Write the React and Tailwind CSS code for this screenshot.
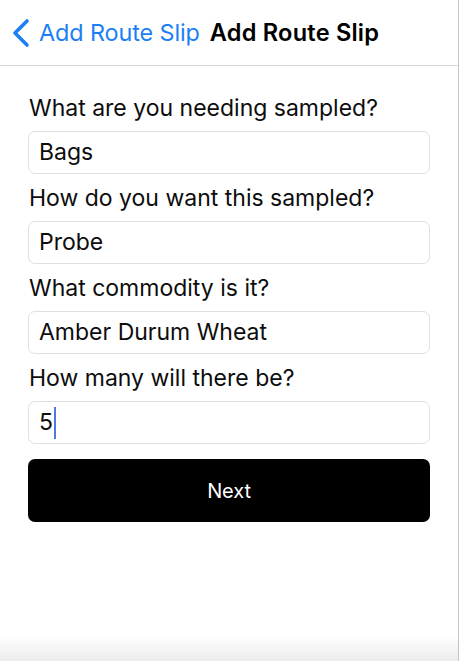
import { useState } from 'react'

const fields = [
  { label: 'What are you needing sampled?', value: 'Bags' },
  { label: 'How do you want this sampled?', value: 'Probe' },
  { label: 'What commodity is it?', value: 'Amber Durum Wheat' },
  { label: 'How many will there be?', value: '5', focused: true },
]

function BackChevron() {
  return (
    <svg width="20" height="30" viewBox="0 0 20 30" fill="none">
      <path d="M16 3L4 15l12 12" stroke="#1b7ff5" strokeWidth="3.6" strokeLinecap="round" strokeLinejoin="round" />
    </svg>
  )
}

export default function App() {
  const [values] = useState(fields.map((f) => f.value))

  return (
    <div className="w-[460px] h-[661px] bg-white flex font-['Inter','Liberation_Sans',sans-serif]">
      <div className="w-[459px] h-full flex flex-col border-r border-[#c4c4c4] bg-gradient-to-b from-white from-[96%] to-[#ececec]">
        <div className="h-[66px] shrink-0 flex items-center border-b border-[#d9d9d9] pl-[11px]">
          <BackChevron />
          <span className="ml-[8px] text-[23.4px] text-[#1b7ff5] tracking-[-0.1px]">Add Route Slip</span>
          <span className="ml-[10px] text-[23.6px] font-semibold text-black tracking-[0.2px]">Add Route Slip</span>
        </div>

        <div className="flex flex-col px-[28px] pt-[18px]">
          {fields.map((f, i) => (
            <div key={f.label} className="flex flex-col">
              <label className="pl-[1px] pt-[10px] pb-[8px] leading-[29px] text-[23px] text-[#0d0d0d]">
                {f.label}
              </label>
              <div className="h-[43px] w-[402px] rounded-[7px] border border-[#e0e0e0] bg-white flex items-center px-[10px]">
                <span className="text-[23px] text-[#0d0d0d]">{values[i]}</span>
                {f.focused && <span className="ml-[1px] w-[2px] h-[32px] bg-[#4f78e0]" />}
              </div>
            </div>
          ))}

          <button className="mt-[15px] h-[63px] w-[402px] rounded-[7px] bg-black text-white text-[20px] tracking-[-0.1px]">
            Next
          </button>
        </div>
      </div>
    </div>
  )
}
